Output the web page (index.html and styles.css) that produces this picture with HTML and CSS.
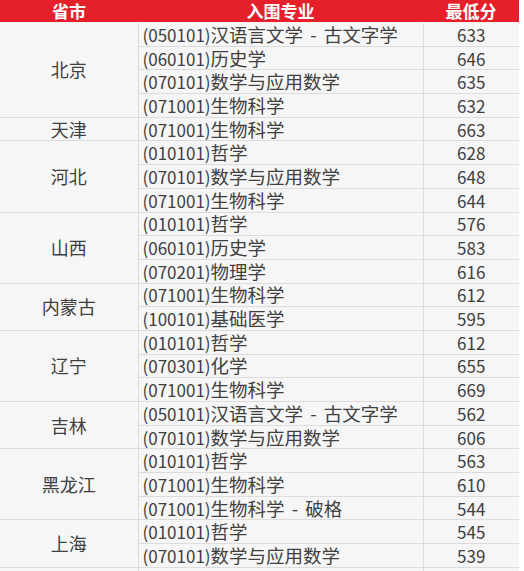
FILE: index.html
```html
<!DOCTYPE html>
<html lang="zh">
<head>
<meta charset="utf-8">
<link rel="stylesheet" href="styles.css">
</head>
<body>
<table class="score">
<colgroup><col class="c1"><col class="c2"><col class="c3"></colgroup>
<thead>
<tr><th>省市</th><th>入围专业</th><th>最低分</th></tr>
</thead>
<tbody>
<tr><td class="prov" rowspan="4">北京</td><td class="major">(050101)<span class="zh">汉语言文学 - 古文字学</span></td><td class="num">633</td></tr>
<tr><td class="major">(060101)<span class="zh">历史学</span></td><td class="num">646</td></tr>
<tr><td class="major">(070101)<span class="zh">数学与应用数学</span></td><td class="num">635</td></tr>
<tr><td class="major">(071001)<span class="zh">生物科学</span></td><td class="num">632</td></tr>
<tr><td class="prov">天津</td><td class="major">(071001)<span class="zh">生物科学</span></td><td class="num">663</td></tr>
<tr><td class="prov" rowspan="3">河北</td><td class="major">(010101)<span class="zh">哲学</span></td><td class="num">628</td></tr>
<tr><td class="major">(070101)<span class="zh">数学与应用数学</span></td><td class="num">648</td></tr>
<tr><td class="major">(071001)<span class="zh">生物科学</span></td><td class="num">644</td></tr>
<tr><td class="prov" rowspan="3">山西</td><td class="major">(010101)<span class="zh">哲学</span></td><td class="num">576</td></tr>
<tr><td class="major">(060101)<span class="zh">历史学</span></td><td class="num">583</td></tr>
<tr><td class="major">(070201)<span class="zh">物理学</span></td><td class="num">616</td></tr>
<tr><td class="prov" rowspan="2">内蒙古</td><td class="major">(071001)<span class="zh">生物科学</span></td><td class="num">612</td></tr>
<tr><td class="major">(100101)<span class="zh">基础医学</span></td><td class="num">595</td></tr>
<tr><td class="prov" rowspan="3">辽宁</td><td class="major">(010101)<span class="zh">哲学</span></td><td class="num">612</td></tr>
<tr><td class="major">(070301)<span class="zh">化学</span></td><td class="num">655</td></tr>
<tr><td class="major">(071001)<span class="zh">生物科学</span></td><td class="num">669</td></tr>
<tr><td class="prov" rowspan="2">吉林</td><td class="major">(050101)<span class="zh">汉语言文学 - 古文字学</span></td><td class="num">562</td></tr>
<tr><td class="major">(070101)<span class="zh">数学与应用数学</span></td><td class="num">606</td></tr>
<tr><td class="prov" rowspan="3">黑龙江</td><td class="major">(010101)<span class="zh">哲学</span></td><td class="num">563</td></tr>
<tr><td class="major">(071001)<span class="zh">生物科学</span></td><td class="num">610</td></tr>
<tr><td class="major">(071001)<span class="zh">生物科学 - 破格</span></td><td class="num">544</td></tr>
<tr><td class="prov" rowspan="2">上海</td><td class="major">(010101)<span class="zh">哲学</span></td><td class="num">545</td></tr>
<tr><td class="major">(070101)<span class="zh">数学与应用数学</span></td><td class="num">539</td></tr>
<tr><td class="prov"></td><td class="major"></td><td class="num"></td></tr>
</tbody>
</table>
</body>
</html>
```
FILE: styles.css
```css
html, body {
  margin: 0;
  padding: 0;
  background: #ffffff;
  overflow: hidden;
}
.score {
  border-collapse: collapse;
  table-layout: fixed;
  width: 519px;
  font-family: "Noto Sans CJK SC", "Noto Sans", sans-serif;
  color: #404040;
  font-size: 17px;
}
.c1 { width: 138px; }
.c2 { width: 285px; }
.c3 { width: 96px; }
.score th {
  background: #e5202b;
  color: #ffffff;
  font-weight: bold;
  height: 22px;
  padding: 0;
  line-height: 20px;
  font-size: 17px;
  vertical-align: middle;
  border-bottom: 1px solid #f2f2f2;
}
.score td {
  background: #f6f6f6;
  border: 1px solid #dcdcdc;
  height: 22.7px;
  padding: 0;
  line-height: 21px;
  white-space: nowrap;
}
.score tr td:first-child { border-left: none; }
.score tr td:last-child { border-right: none; }
.prov { text-align: center; font-size: 18px; }
.major { text-align: left; padding-left: 4px !important; }
.zh { font-size: 18.5px; word-spacing: 3px; }
.num { text-align: center; }
```
